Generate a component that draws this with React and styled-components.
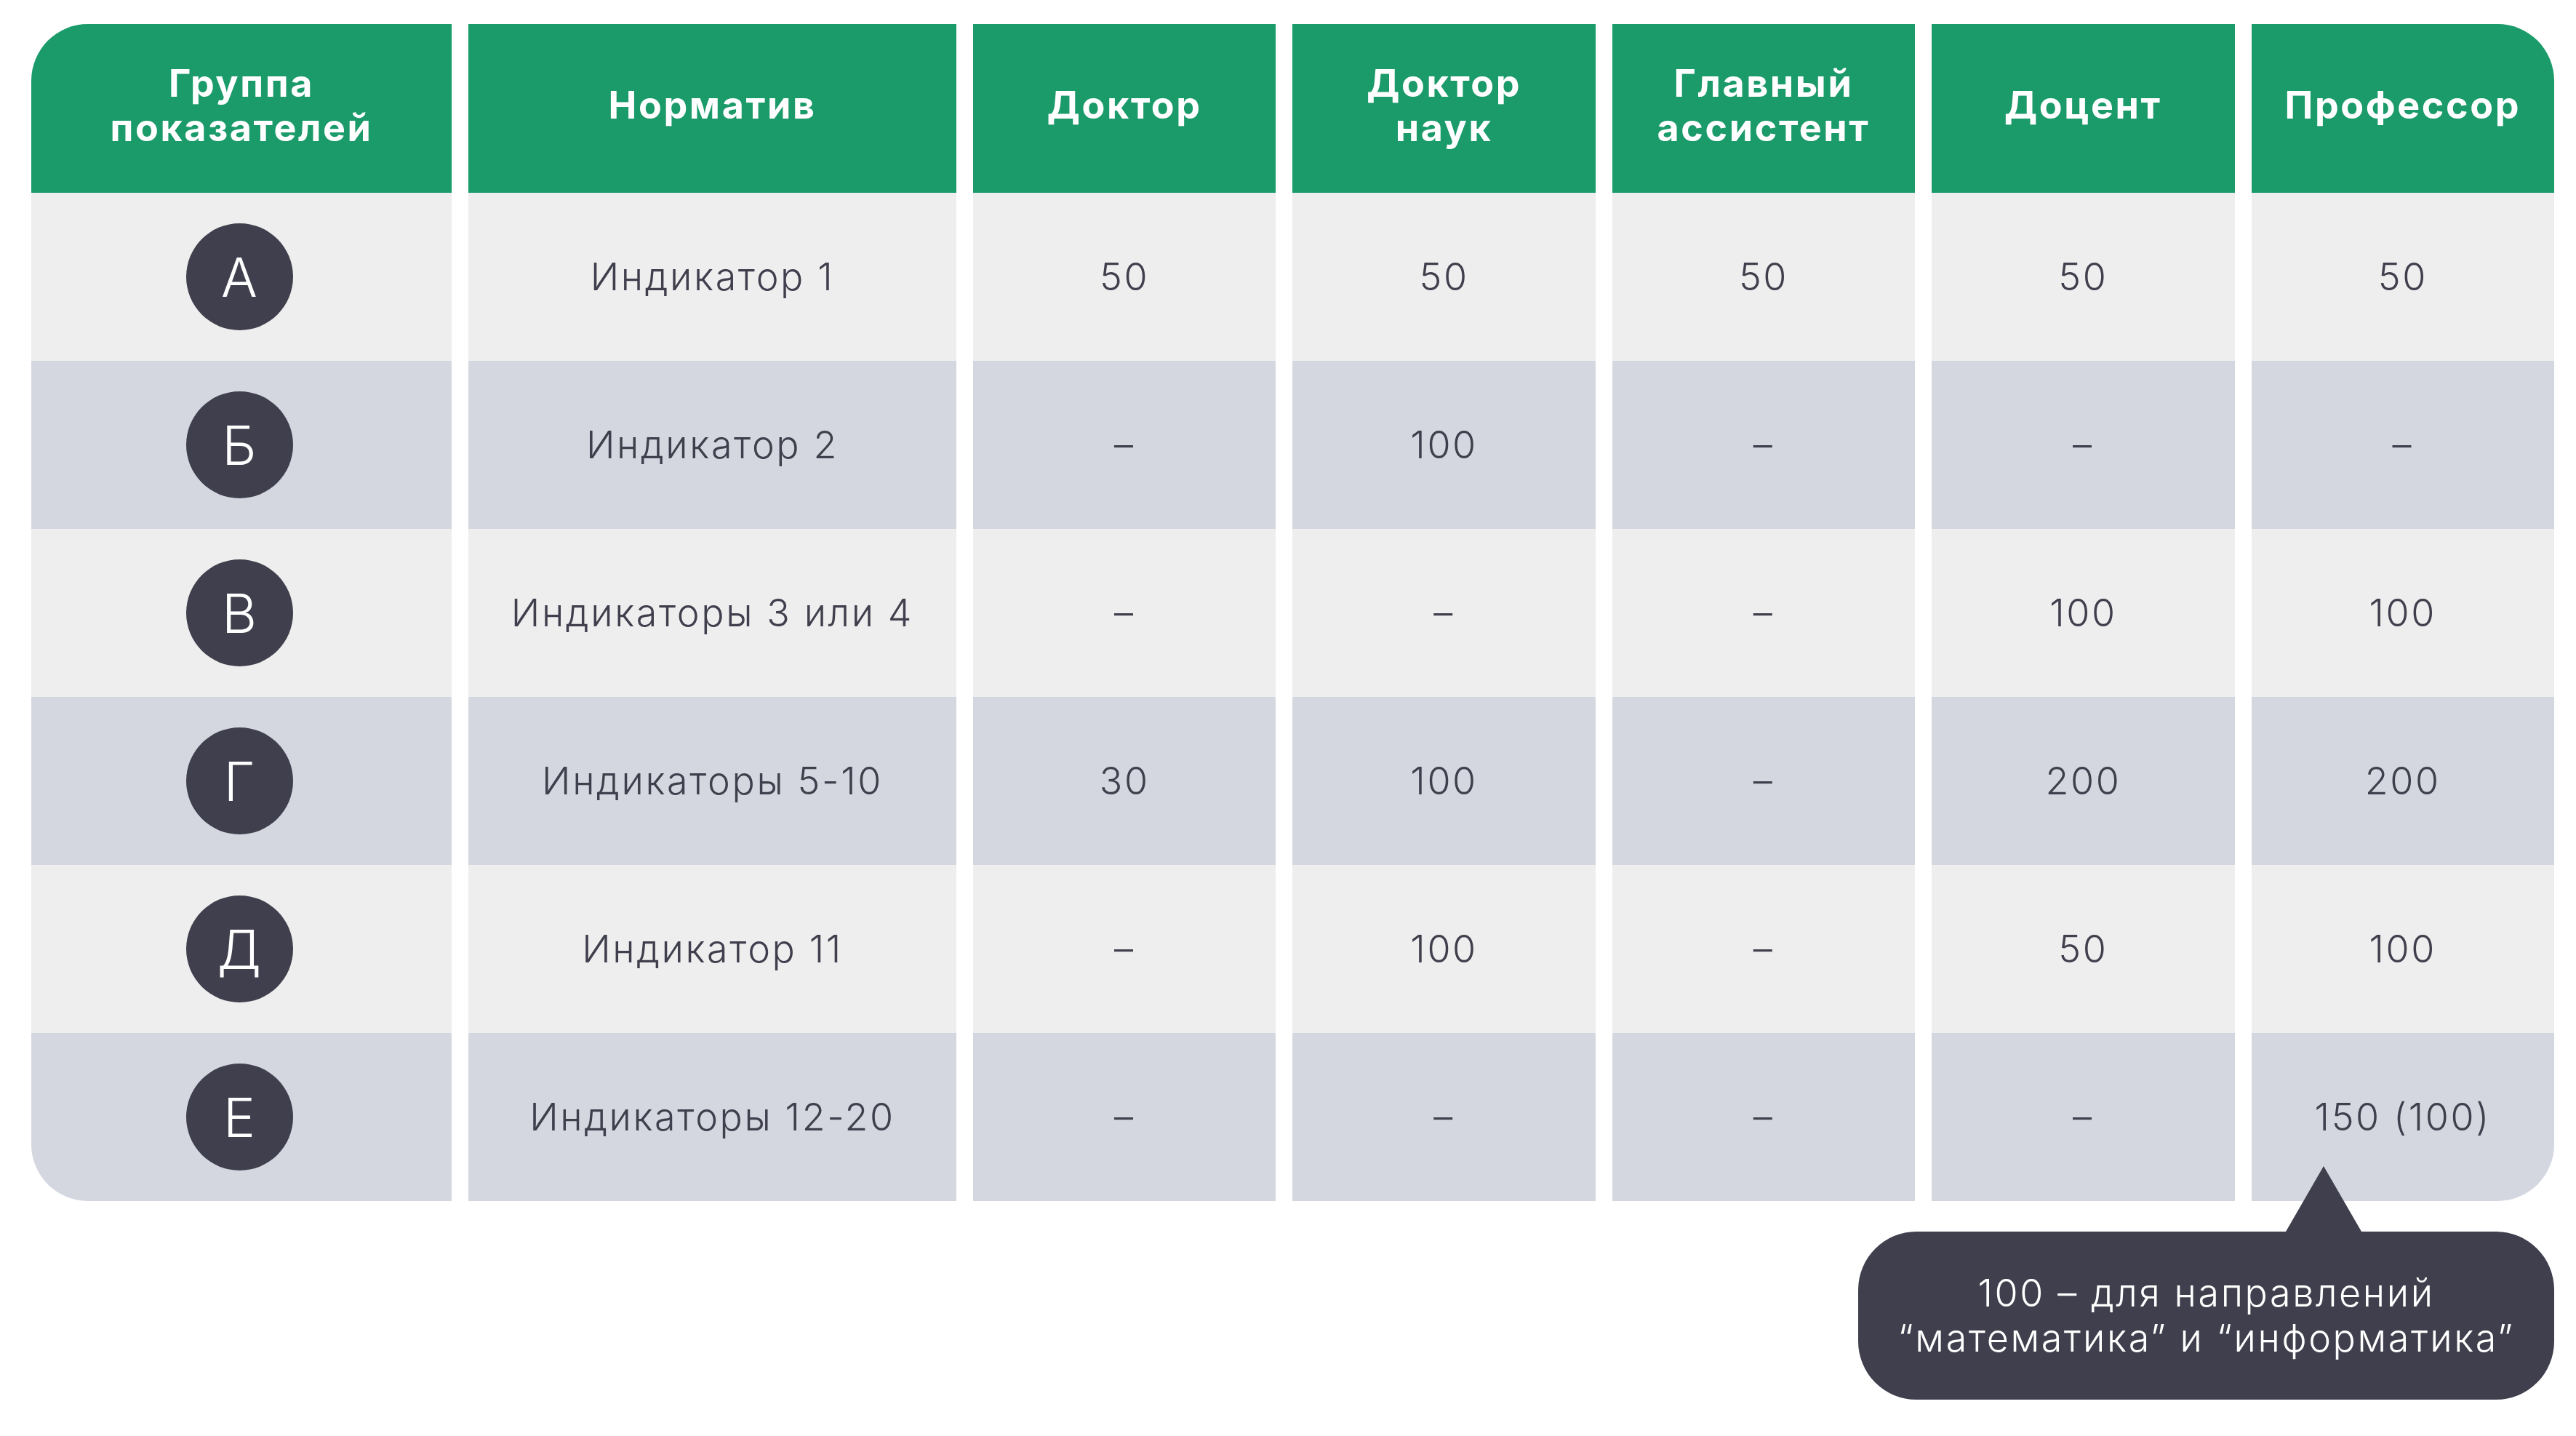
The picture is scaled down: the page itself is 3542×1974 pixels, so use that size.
import React from 'react';
import styled, { createGlobalStyle } from 'styled-components';

const GlobalStyle = createGlobalStyle`
  body {
    margin: 0;
    background: #ffffff;
    font-family: Inter, "Open Sans", "Liberation Sans", sans-serif;
  }
`;

const headers = [
  'Группа\nпоказателей',
  'Норматив',
  'Доктор',
  'Доктор\nнаук',
  'Главный\nассистент',
  'Доцент',
  'Профессор',
];

const rows = [
  ['А', 'Индикатор 1', '50', '50', '50', '50', '50'],
  ['Б', 'Индикатор 2', '–', '100', '–', '–', '–'],
  ['В', 'Индикаторы 3 или 4', '–', '–', '–', '100', '100'],
  ['Г', 'Индикаторы 5-10', '30', '100', '–', '200', '200'],
  ['Д', 'Индикатор 11', '–', '100', '–', '50', '100'],
  ['Е', 'Индикаторы 12-20', '–', '–', '–', '–', '150 (100)'],
];

const cornerRadius = (corner) => {
  if (corner === 'tl') return '78px 0 0 0';
  if (corner === 'tr') return '0 78px 0 0';
  if (corner === 'bl') return '0 0 0 78px';
  if (corner === 'br') return '0 0 78px 0';
  return '0';
};

const App = () => {
  const last = rows.length - 1;

  return (
    <styles.Page>
      <GlobalStyle />
      <styles.Table>
        {headers.map((h, i) => (
          <styles.HeadCell
            key={h}
            $corner={i === 0 ? 'tl' : i === headers.length - 1 ? 'tr' : null}
          >
            {h}
          </styles.HeadCell>
        ))}
        {rows.map((row, r) =>
          row.map((value, c) => {
            let corner = null;
            if (r === last && c === 0) corner = 'bl';
            if (r === last && c === row.length - 1) corner = 'br';
            return (
              <styles.BodyCell key={`${r}-${c}`} $dark={r % 2 === 1} $corner={corner}>
                {c === 0 ? <styles.Badge>{value}</styles.Badge> : value}
              </styles.BodyCell>
            );
          })
        )}
      </styles.Table>
      <styles.NoteRow>
        <styles.Bubble>
          100 – для направлений
          <br />
          “математика” и “информатика”
        </styles.Bubble>
      </styles.NoteRow>
    </styles.Page>
  );
};

const styles = {
  Page: styled.div`
    padding: 33px 0 0 43px;
  `,

  Table: styled.div`
    display: grid;
    width: 3469px;
    grid-template-columns: 578px 671px repeat(5, 1fr);
    grid-template-rows: 232px;
    grid-auto-rows: 231px;
    column-gap: 23px;
  `,

  HeadCell: styled.div`
    display: flex;
    justify-content: center;
    align-items: center;
    text-align: center;
    white-space: pre-line;
    padding-bottom: 9px;
    background: #1b9a6a;
    color: #ffffff;
    font-size: 52px;
    font-weight: 700;
    line-height: 61px;
    letter-spacing: 2.6px;
    border-radius: ${(p) => cornerRadius(p.$corner)};
  `,

  BodyCell: styled.div`
    display: flex;
    justify-content: center;
    align-items: center;
    background: ${(p) => (p.$dark ? '#d4d7e0' : '#eeeeee')};
    color: #403f4d;
    font-size: 52px;
    font-weight: 300;
    letter-spacing: 2.6px;
    border-radius: ${(p) => cornerRadius(p.$corner)};
  `,

  Badge: styled.div`
    width: 147px;
    height: 147px;
    margin-left: -6px;
    border-radius: 50%;
    background: #403f4d;
    color: #ffffff;
    display: flex;
    justify-content: center;
    align-items: center;
    font-size: 74px;
    font-weight: 300;
    letter-spacing: 0;
  `,

  NoteRow: styled.div`
    display: flex;
    justify-content: flex-end;
    width: 3469px;
    margin-top: 42px;
  `,

  Bubble: styled.div`
    position: relative;
    width: 957px;
    height: 231px;
    border-radius: 80px;
    background: #403f4d;
    color: #ffffff;
    display: flex;
    flex-direction: column;
    justify-content: center;
    align-items: center;
    text-align: center;
    font-size: 52px;
    font-weight: 300;
    line-height: 62px;
    letter-spacing: 2.6px;

    &::before {
      content: '';
      position: absolute;
      left: 588px;
      bottom: 100%;
      width: 104px;
      height: 90px;
      background: #403f4d;
      clip-path: polygon(50% 0, 100% 100%, 0 100%);
    }
  `,
};

export default App;
